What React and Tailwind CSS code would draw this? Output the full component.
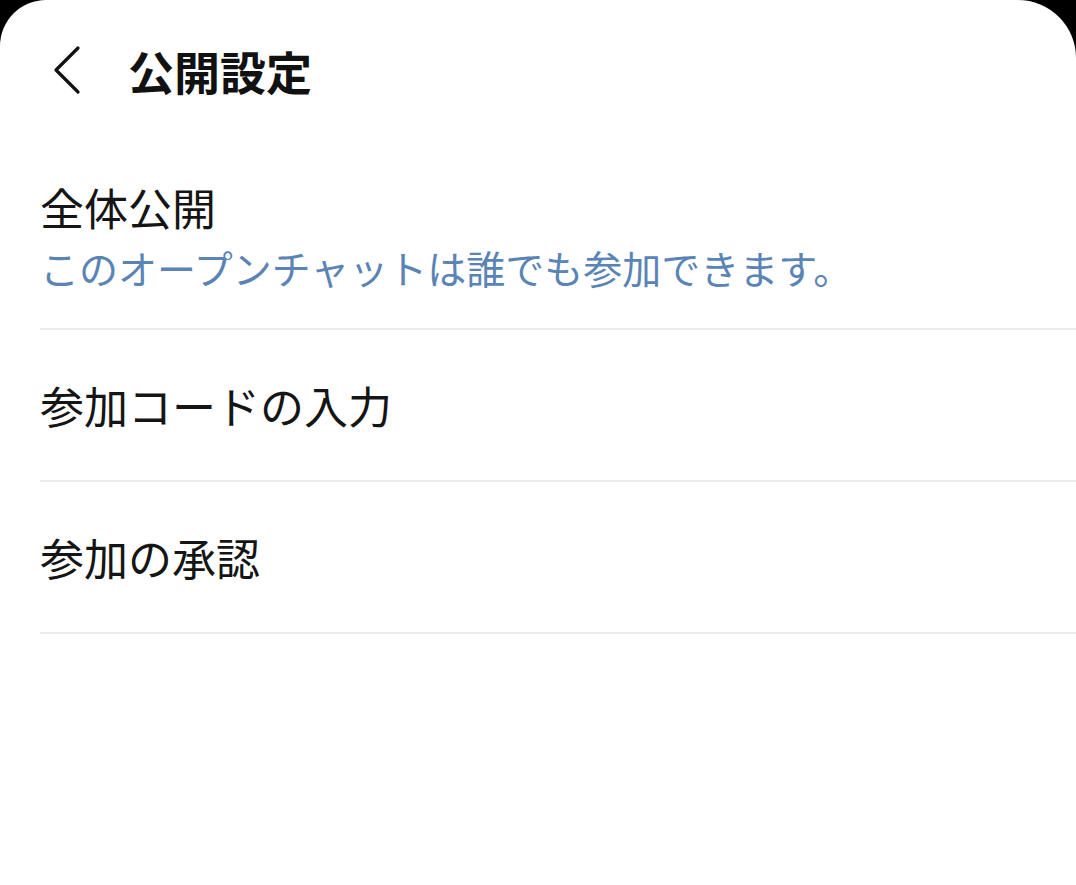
import React from "react";

const font = { fontFamily: '"Noto Sans CJK JP", "Noto Sans", sans-serif' };

const BackIcon = () => (
  <svg width="40" height="50" viewBox="0 0 40 50" fill="none">
    <polyline
      points="32,3 10,25 32,47"
      stroke="#111111"
      strokeWidth="3.2"
      strokeLinecap="round"
      strokeLinejoin="round"
    />
  </svg>
);

const items = [
  { title: "全体公開", sub: "このオープンチャットは誰でも参加できます。" },
  { title: "参加コードの入力" },
  { title: "参加の承認" },
];

const App = () => {
  return (
    <div className="w-full h-[885px] bg-black" style={font}>
      <div className="w-full h-full bg-white rounded-tl-[46px] rounded-tr-[58px] overflow-hidden">
        <div className="h-[144px] flex items-center pl-[46px] pb-[4px]">
          <BackIcon />
          <div className="ml-[42px] text-[46px] leading-[60px] font-bold text-[#111111]">
            公開設定
          </div>
        </div>
        <div className="pl-[40px]">
          {items.map((item, i) => (
            <div
              key={item.title}
              className={
                i === 0
                  ? "pt-[33px] pb-[31px] border-b-2 border-[#ececec]"
                  : "pt-[45px] pb-[45px] border-b-2 border-[#ececec]"
              }
            >
              <div className="text-[44px] leading-[60px] text-[#151515]">
                {item.title}
              </div>
              {item.sub && (
                <div className="text-[39px] leading-[60px] text-[#5a84b5]">
                  {item.sub}
                </div>
              )}
            </div>
          ))}
        </div>
      </div>
    </div>
  );
};

export default App;
